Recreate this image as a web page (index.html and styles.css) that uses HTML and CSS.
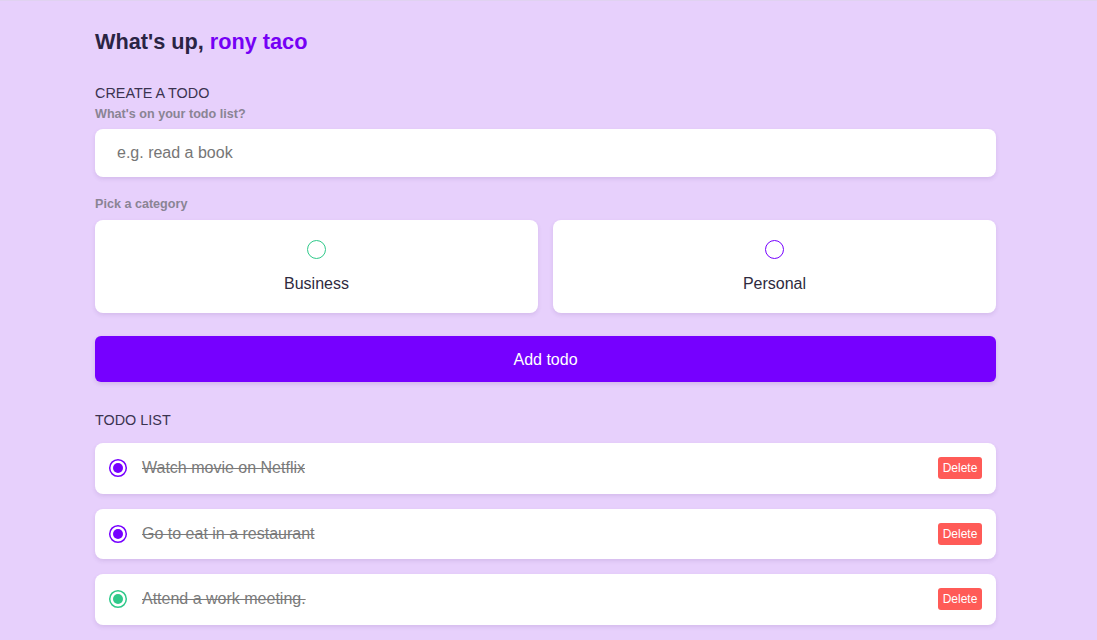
FILE: index.html
```html
<!DOCTYPE html>
<html lang="en">
<head>
<meta charset="utf-8">
<title>Todo</title>
<link rel="stylesheet" href="styles.css">
</head>
<body>
<main class="app">
  <h2 class="greeting">What's up, <span class="name">rony taco</span></h2>

  <section class="create">
    <h3 class="section-title">CREATE A TODO</h3>
    <h4 class="label">What's on your todo list?</h4>
    <input class="text-input" type="text" placeholder="e.g. read a book">

    <h4 class="label label-cat">Pick a category</h4>
    <div class="options">
      <label class="option">
        <span class="bubble bubble-business"></span>
        <span class="option-text">Business</span>
      </label>
      <label class="option">
        <span class="bubble bubble-personal"></span>
        <span class="option-text">Personal</span>
      </label>
    </div>
    <button class="add-btn">Add todo</button>
  </section>

  <section class="list">
    <h3 class="section-title">TODO LIST</h3>
    <div class="items">
      <div class="item">
        <svg class="check" width="20" height="20" viewBox="0 0 20 20"><circle cx="10" cy="10" r="8.3" fill="none" stroke="#7600ff" stroke-width="1.5"/><circle cx="10" cy="10" r="5" fill="#7600ff"/></svg>
        <span class="item-text">Watch movie on Netflix</span>
        <button class="del">Delete</button>
      </div>
      <div class="item">
        <svg class="check" width="20" height="20" viewBox="0 0 20 20"><circle cx="10" cy="10" r="8.3" fill="none" stroke="#7600ff" stroke-width="1.5"/><circle cx="10" cy="10" r="5" fill="#7600ff"/></svg>
        <span class="item-text">Go to eat in a restaurant</span>
        <button class="del">Delete</button>
      </div>
      <div class="item">
        <svg class="check" width="20" height="20" viewBox="0 0 20 20"><circle cx="10" cy="10" r="8.3" fill="none" stroke="#2fc98a" stroke-width="1.5"/><circle cx="10" cy="10" r="5" fill="#2fc98a"/></svg>
        <span class="item-text">Attend a work meeting.</span>
        <button class="del">Delete</button>
      </div>
    </div>
  </section>
</main>
</body>
</html>
```

FILE: styles.css
```css
* { box-sizing: border-box; }
html, body { height: 100%; }
body {
  margin: 0;
  background: #e7d0fc;
  border-top: 1px solid #e0d2f0;
  font-family: "Liberation Sans", Arial, sans-serif;
  color: #2c2545;
  overflow: hidden;
}
.app {
  padding: 28px 101px 0 95px;
}
.greeting {
  margin: 0;
  font-size: 21.7px;
  line-height: 26px;
  font-weight: 700;
  color: #2a2444;
}
.name { color: #7500f5; }
.create { margin-top: 30px; }
.section-title {
  margin: 0;
  font-size: 14.4px;
  line-height: 16px;
  font-weight: 400;
  color: #3a3350;
}
.label {
  margin: 6px 0 0;
  font-size: 12.6px;
  line-height: 14px;
  font-weight: 700;
  color: #8a8494;
}
.text-input {
  display: block;
  width: 100%;
  height: 48px;
  margin-top: 8px;
  border: none;
  outline: none;
  border-radius: 8px;
  background: #fff;
  padding: 0 22px;
  font-family: "Liberation Sans", Arial, sans-serif;
  font-size: 16px;
  color: #333;
  box-shadow: 0 2px 4px rgba(80, 40, 120, 0.12);
}
.text-input::placeholder { color: #767676; }
.label-cat { margin-top: 20px; }
.options {
  display: grid;
  grid-template-columns: 1fr 1fr;
  gap: 15px;
  margin-top: 9px;
}
.option {
  display: flex;
  flex-direction: column;
  align-items: center;
  height: 93px;
  padding-top: 20px;
  background: #fff;
  border-radius: 8px;
  box-shadow: 0 2px 4px rgba(80, 40, 120, 0.12);
}
.bubble {
  width: 19px;
  height: 19px;
  border-radius: 50%;
  border: 1.5px solid;
}
.bubble-business { border-color: #2fc98a; }
.bubble-personal { border-color: #7600ff; }
.option-text {
  margin-top: 16px;
  font-size: 16px;
  line-height: 18px;
  color: #2e2a3e;
}
.add-btn {
  display: block;
  width: 100%;
  height: 46px;
  margin-top: 23px;
  padding-top: 2px;
  border: none;
  border-radius: 6px;
  background: #7600ff;
  color: #fff;
  font-family: "Liberation Sans", Arial, sans-serif;
  font-size: 16px;
  box-shadow: 0 2px 4px rgba(80, 40, 120, 0.15);
}
.list { margin-top: 30px; }
.items {
  display: flex;
  flex-direction: column;
  gap: 15px;
  margin-top: 15px;
}
.item {
  display: flex;
  align-items: center;
  height: 50.5px;
  padding: 0 14px 0 13px;
  background: #fff;
  border-radius: 8px;
  box-shadow: 0 2px 4px rgba(80, 40, 120, 0.12);
}
.check { flex: none; }
.item-text {
  flex: 1;
  margin-left: 14px;
  font-size: 16px;
  color: #7a7a7a;
  text-decoration: line-through;
}
.del {
  width: 44px;
  height: 22px;
  padding: 0;
  border: none;
  border-radius: 3px;
  background: #ff5b57;
  color: #fff;
  font-family: "Liberation Sans", Arial, sans-serif;
  font-size: 12px;
}
```
